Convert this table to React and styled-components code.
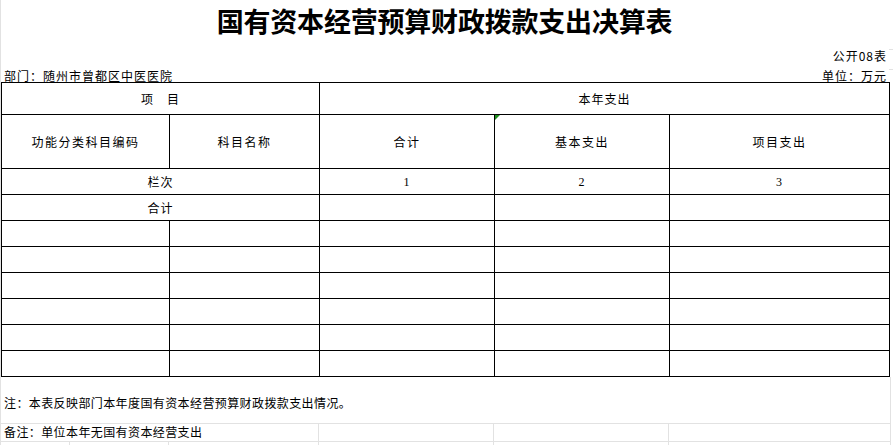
import React from "react";
import styled, { createGlobalStyle } from "styled-components";

const GlobalStyle = createGlobalStyle`
  html, body { margin: 0; padding: 0; background: #ffffff; }
  body { font-family: "Noto Sans CJK SC", "Noto Sans", sans-serif; color: #000; }
`;

const GRID = "#e2e2e2";

const Page = styled.div`
  width: 893px;
  height: 445px;
  overflow: hidden;
  background: #ffffff;
  border-left: 1px solid ${GRID};
  box-sizing: border-box;
  display: flex;
  flex-direction: column;
  & > * { flex-shrink: 0; }
`;

const TitleBar = styled.div`
  height: 49px;
  width: 889px;
  display: flex;
  justify-content: center;
  align-items: flex-start;
  padding-top: 3px;
  box-sizing: border-box;
`;

const Title = styled.h1`
  margin: 0;
  font-size: 27px;
  line-height: 36px;
  font-weight: 700;
  letter-spacing: -0.2px;
  font-family: "Noto Sans CJK SC", sans-serif;
  padding-right: 2px;
`;

const MetaRow = styled.div`
  display: grid;
  grid-template-columns: 888px 1fr;
  height: ${(p) => p.$h}px;
`;

const MetaMain = styled.div`
  display: flex;
  justify-content: ${(p) => (p.$split ? "space-between" : "flex-end")};
  align-items: flex-start;
  padding: 0 2px 0 3px;
  font-size: 12px;
  line-height: ${(p) => p.$lh}px;
  letter-spacing: 1px;
  white-space: nowrap;
`;

const Gutter = styled.div`
  border-top: 1px solid ${GRID};
`;

const TableWrap = styled.div`
  width: 888px;
`;

const Sheet = styled.table`
  border-collapse: collapse;
  table-layout: fixed;
  width: 888px;
  font-size: 12px;
`;

const Row = styled.tr`
  height: ${(p) => p.$h}px;
`;

const Cell = styled.td`
  border: 1px solid #000;
  padding: 0;
  text-align: center;
  vertical-align: middle;
  font-weight: 400;
  font-size: 12px;
  line-height: 14px;
  letter-spacing: ${(p) => (p.$wide ? "1.5px" : "1px")};
  font-family: ${(p) =>
    p.$num ? '"Liberation Serif", serif' : '"Noto Sans CJK SC", sans-serif'};
  position: ${(p) => (p.$flag ? "relative" : "static")};

  &::before {
    content: ${(p) => (p.$flag ? '""' : "none")};
    position: absolute;
    left: 0;
    top: 0;
    width: 0;
    height: 0;
    border-top: 5px solid #1f8f1f;
    border-right: 5px solid transparent;
  }
`;

const Notes = styled.div`
  width: 889px;
  border-right: 1px solid ${GRID};
  display: flex;
  flex-direction: column;
  height: 80px;
`;

const NoteLine = styled.div`
  height: 47px;
  flex-shrink: 0;
  border-bottom: 1px solid ${GRID};
  display: flex;
  align-items: center;
  padding-left: 3px;
  padding-top: 4px;
  box-sizing: border-box;
  font-size: 12px;
  letter-spacing: 0.4px;
  white-space: nowrap;
`;

const GridRow = styled.div`
  display: grid;
  grid-template-columns: ${(p) => p.$cols};
  height: ${(p) => p.$h}px;
  border-bottom: ${(p) => (p.$last ? "none" : `1px solid ${GRID}`)};
  flex-shrink: 0;
`;

const GridCell = styled.div`
  border-right: ${(p) => (p.$noRight ? "none" : `1px solid ${GRID}`)};
  font-size: 12px;
  line-height: 16px;
  padding-left: 3px;
  letter-spacing: 0.4px;
  white-space: nowrap;
  overflow: visible;
`;

const cols = [168, 150, 175, 175, 220];

export default function App() {
  const blanks = Array.from({ length: 6 });
  return (
    <>
      <GlobalStyle />
      <Page>
        <TitleBar>
          <Title>国有资本经营预算财政拨款支出决算表</Title>
        </TitleBar>
        <MetaRow $h={20}>
          <MetaMain $lh={14}>
            <span>公开08表</span>
          </MetaMain>
          <Gutter />
        </MetaRow>
        <MetaRow $h={13}>
          <MetaMain $split $lh={13}>
            <span>部门：随州市曾都区中医医院</span>
            <span>单位：万元</span>
          </MetaMain>
          <Gutter />
        </MetaRow>
        <TableWrap>
          <Sheet>
            <colgroup>
              {cols.map((w, i) => (
                <col key={i} style={{ width: w }} />
              ))}
            </colgroup>
            <tbody>
              <Row $h={32}>
                <Cell colSpan={2}>项　目</Cell>
                <Cell colSpan={3}>本年支出</Cell>
              </Row>
              <Row $h={54}>
                <Cell $wide>功能分类科目编码</Cell>
                <Cell $wide>科目名称</Cell>
                <Cell $wide>合计</Cell>
                <Cell $wide $flag>基本支出</Cell>
                <Cell $wide>项目支出</Cell>
              </Row>
              <Row $h={26}>
                <Cell colSpan={2}>栏次</Cell>
                <Cell $num>1</Cell>
                <Cell $num>2</Cell>
                <Cell $num>3</Cell>
              </Row>
              <Row $h={26}>
                <Cell colSpan={2}>合计</Cell>
                <Cell />
                <Cell />
                <Cell />
              </Row>
              {blanks.map((_, i) => (
                <Row key={i} $h={26}>
                  <Cell />
                  <Cell />
                  <Cell />
                  <Cell />
                  <Cell />
                </Row>
              ))}
            </tbody>
          </Sheet>
        </TableWrap>
        <Notes>
          <NoteLine>注：本表反映部门本年度国有资本经营预算财政拨款支出情况。</NoteLine>
          <GridRow $cols="318px 175px 175px 1fr" $h={17}>
            <GridCell>备注：单位本年无国有资本经营支出</GridCell>
            <GridCell />
            <GridCell />
            <GridCell $noRight />
          </GridRow>
          <GridRow $cols="69px 99px 150px 175px 175px 1fr" $h={14} $last>
            <GridCell />
            <GridCell />
            <GridCell />
            <GridCell />
            <GridCell />
            <GridCell $noRight />
          </GridRow>
        </Notes>
      </Page>
    </>
  );
}
